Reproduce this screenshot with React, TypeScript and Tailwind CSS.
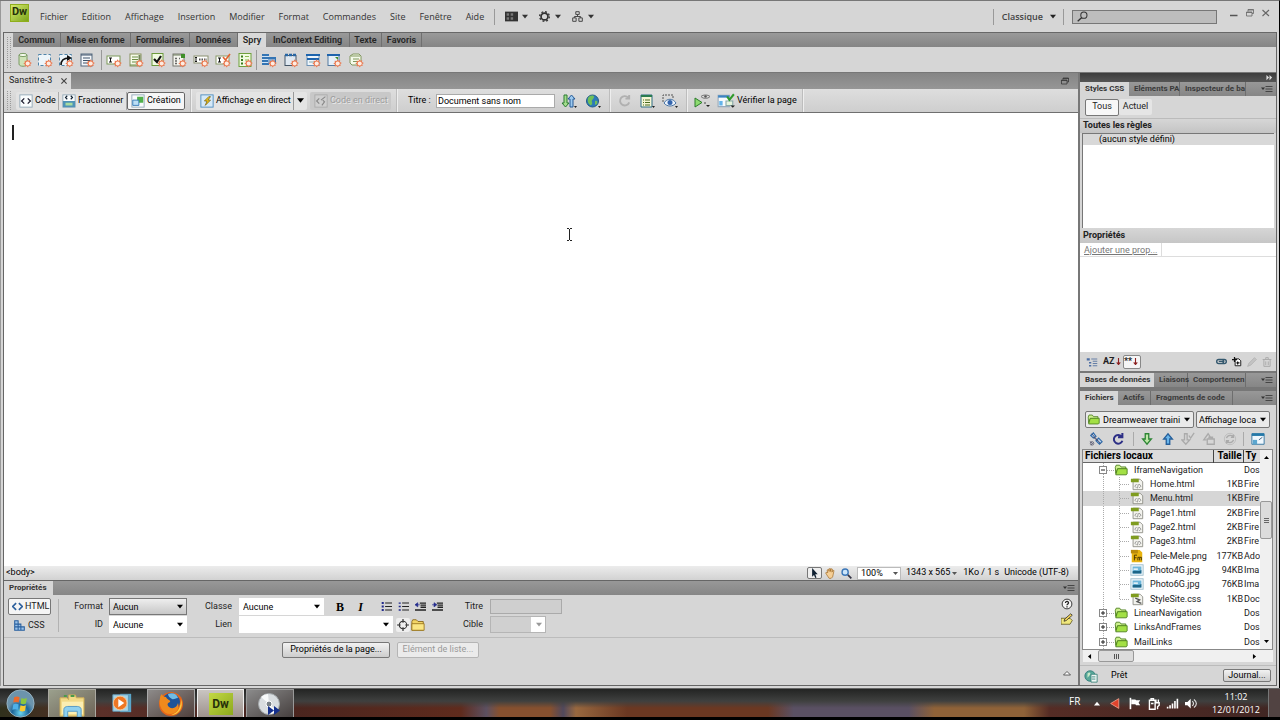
import { useState, type ReactNode } from "react";

type IconProps = { children: ReactNode; size?: string };

function Icon({ children, size = "size-4" }: IconProps) {
  return (
    <svg viewBox="0 0 16 16" className={`${size} shrink-0`} fill="none" aria-hidden="true">
      {children}
    </svg>
  );
}

function Caret({ className = "", size = "w-[7px]" }: { className?: string; size?: string }) {
  return (
    <svg viewBox="0 0 8 5" className={`h-[5px] shrink-0 ${size} ${className}`} aria-hidden="true">
      <path d="M0 0h8L4 5z" fill="currentColor" />
    </svg>
  );
}

// orange burst shown on every insert icon
function Burst() {
  return (
    <g>
      <path
        d="M11.5 7.2l1 1.600 1.700-.5-.2 1.800 1.900.9-1.600 1.100.4 1.800-1.800-.1-1.100 1.800-1.200-1.600-1.900.4.3-1.800-1.700-1 1.600-1-.3-1.900 1.900.2z"
        fill="#ea7b52"
      />
      <circle cx="11.7" cy="11.500" r="2" fill="#fdece2" />
    </g>
  );
}

const insertIcons: { name: string; art: ReactNode }[][] = [
  [
    {
      name: "Jeu de données",
      art: (
        <>
          <path d="M3 3v9c0 3 8 3 8 0V3z" fill="#cfe3b8" stroke="#7c9c66" />
          <ellipse cx="7" cy="3" rx="4" ry="1.6" fill="#f4faec" stroke="#7c9c66" />
        </>
      ),
    },
    {
      name: "Région",
      art: <rect x="1.5" y="2.5" width="12" height="11" fill="#edf5fa" stroke="#4e83a8" strokeDasharray="3 2" />,
    },
    {
      name: "Répétition",
      art: (
        <>
          <rect x="1.5" y="2.5" width="12" height="11" fill="#edf5fa" stroke="#4e83a8" strokeDasharray="3 2" />
          <path d="M3 13c0-5 3-7 8-7" stroke="#111" strokeWidth="1.6" />
          <path d="M9 3l5 3-5 3z" fill="#111" />
        </>
      ),
    },
    {
      name: "Liste de répétitions",
      art: (
        <>
          <rect x="2" y="2" width="11" height="12" fill="#f4f7fa" stroke="#55697e" />
          <path d="M2 3h11M4 6h7M4 8.500h7M4 11h5" stroke="#3e536a" />
        </>
      ),
    },
  ],
  [
    {
      name: "Champ de texte",
      art: (
        <>
          <rect x="1" y="4" width="13" height="8" fill="#fff" stroke="#7c9a5a" />
          <path d="M3 6h3M3 10h3M4.500 6v4" stroke="#111" />
        </>
      ),
    },
    {
      name: "Zone de texte",
      art: (
        <>
          <rect x="2" y="2" width="11" height="12" fill="#f6fbe9" stroke="#87915f" />
          <path d="M4 5h6M4 7.500h6M4 10h5M2 13h9" stroke="#6c8c46" />
          <path d="M11.500 3v9" stroke="#6f8557" strokeWidth="2" />
        </>
      ),
    },
    {
      name: "Case à cocher",
      art: (
        <>
          <rect x="2" y="1.500" width="11" height="12" fill="#f1fbe2" stroke="#6c9a3c" />
          <path d="M4 7l3 3 4-6" stroke="#111" strokeWidth="2.200" />
        </>
      ),
    },
    {
      name: "Sélection",
      art: (
        <>
          <rect x="2" y="2" width="11" height="12" fill="#f4f4ee" stroke="#77776f" />
          <path d="M2 3h8" stroke="#6a7a5a" />
          <path d="M10 2h4v4h-4z" fill="#3f8f2a" />
          <path d="M4 6.500h2M8 6.500h1M4 9h2M4 11.500h2" stroke="#666" strokeWidth="1.500" />
        </>
      ),
    },
    {
      name: "Mot de passe",
      art: (
        <>
          <rect x="1" y="4" width="14" height="7" fill="#fff" stroke="#8a8f70" />
          <path d="M3 6v3M2 5.500h2M2 9.500h2" stroke="#111" />
          <path d="M6 7.500h8" stroke="#555" strokeWidth="2" strokeDasharray="1.500 1" />
        </>
      ),
    },
    {
      name: "Confirmer le mot de passe",
      art: (
        <>
          <rect x="1" y="4" width="13" height="8" fill="#fff" stroke="#8a9a6a" />
          <path d="M3 6h3M3 10h3M4.500 6v4" stroke="#111" />
          <path d="M8 5l2.500 3L15 2" stroke="#e2622f" strokeWidth="1.600" />
        </>
      ),
    },
    {
      name: "Groupe de boutons radio",
      art: (
        <>
          <rect x="2" y="1.500" width="12" height="13" fill="#f1fbe2" stroke="#6fa03c" />
          <path d="M4 4.500h2M4 8h2M4 11.500h2" stroke="#3b7a1e" strokeWidth="2" />
          <path d="M8 4.500h4M8 8h4" stroke="#8dbb52" />
        </>
      ),
    },
  ],
  [
    {
      name: "Barre de menus",
      art: (
        <>
          <path d="M1 2h7v11H1zM7 5h8v7H7z" fill="#3475b4" />
          <path d="M1 4.500h7M1 7.500h6M1 10.500h6M7 8h7M7 10h4" stroke="#cfe3f5" />
        </>
      ),
    },
    {
      name: "Panneaux à onglets",
      art: (
        <>
          <rect x="2" y="3.500" width="11" height="10" fill="#dfe8f1" stroke="#456" />
          <path d="M2 3h3M6 3h3M10 3h3" stroke="#2766a4" strokeWidth="2.500" />
        </>
      ),
    },
    {
      name: "Accordéon",
      art: (
        <>
          <rect x="2" y="2.500" width="12" height="11" fill="#eef5fb" stroke="#6f93b6" />
          <path d="M1 3h14M2 7h12" stroke="#1e64ad" strokeWidth="2" />
          <path d="M4 10h6" stroke="#8aa" />
        </>
      ),
    },
    {
      name: "Panneau réductible",
      art: (
        <>
          <rect x="2" y="2.500" width="11" height="11" fill="#e5eff8" stroke="#557a9f" />
          <path d="M1 3h13" stroke="#1e64ad" strokeWidth="2" />
          <path d="M9 5h3v3z" fill="#3f8f2a" />
        </>
      ),
    },
    {
      name: "Info-bulle",
      art: (
        <>
          <path d="M2 4l3-2h6l2 2v9H4l-2-2z" fill="#f4fbea" stroke="#81965f" />
          <path d="M3 4h9M5 7h6M5 9.500h4" stroke="#81965f" />
        </>
      ),
    },
  ],
];

const menus = ["Fichier", "Edition", "Affichage", "Insertion", "Modifier", "Format", "Commandes", "Site", "Fenêtre", "Aide"];

const insertTabs = [
  { label: "Commun", width: "w-[48px]" },
  { label: "Mise en forme", width: "w-[70px]" },
  { label: "Formulaires", width: "w-[59px]" },
  { label: "Données", width: "w-[48px]" },
  { label: "Spry", width: "w-[28px]" },
  { label: "InContext Editing", width: "w-[84px]" },
  { label: "Texte", width: "w-[32px]" },
  { label: "Favoris", width: "w-[40px]" },
];

type FileRow = { name: string; kind: "folder" | "open" | "html" | "png" | "jpg" | "css"; size?: string; type: string };

const files: FileRow[] = [
  { name: "IframeNavigation", kind: "open", type: "Dos" },
  { name: "Home.html", kind: "html", size: "1KB", type: "Fire" },
  { name: "Menu.html", kind: "html", size: "1KB", type: "Fire" },
  { name: "Page1.html", kind: "html", size: "2KB", type: "Fire" },
  { name: "Page2.html", kind: "html", size: "2KB", type: "Fire" },
  { name: "Page3.html", kind: "html", size: "2KB", type: "Fire" },
  { name: "Pele-Mele.png", kind: "png", size: "177KB", type: "Ado" },
  { name: "Photo4G.jpg", kind: "jpg", size: "94KB", type: "Ima" },
  { name: "Photo6G.jpg", kind: "jpg", size: "76KB", type: "Ima" },
  { name: "StyleSite.css", kind: "css", size: "1KB", type: "Doc" },
  { name: "LinearNavigation", kind: "folder", type: "Dos" },
  { name: "LinksAndFrames", kind: "folder", type: "Dos" },
  { name: "MailLinks", kind: "folder", type: "Dos" },
];

function FolderArt() {
  return (
    <>
      <path d="M1.500 5l1-2.500h4L8 4.500h5.500V7H4L2 12z" fill="#cdf08e" stroke="#4a7d1c" />
      <path d="M2 13.500L4 6.500h11v6l-1 1z" fill="#a3e045" stroke="#4a7d1c" />
    </>
  );
}

function FileArt({ kind }: { kind: FileRow["kind"] }) {
  if (kind === "folder" || kind === "open") return <FolderArt />;
  if (kind === "png")
    return (
      <>
        <path d="M2 1h9l3 3v11H2z" fill="#e8b30f" />
        <path d="M1 1h8v4H1z" fill="#b98a0c" />
        <path d="M5 13V7h3M5 10h2.500M9 13V9.500h4V13M11 10v3" stroke="#3b2b00" />
      </>
    );
  if (kind === "jpg")
    return (
      <>
        <rect x="1" y="2" width="14" height="12" fill="#eef6fa" stroke="#9dbccb" />
        <path d="M3 4h10v8H3z" fill="#6db6da" />
        <path d="M3 9.500c3-2 6 1 10-1.500v4H3z" fill="#1d6587" />
        <path d="M4 7h5" stroke="#fff" strokeWidth="1.500" />
      </>
    );
  return (
    <>
      <path d="M3.500 2.500h8l3 3v9h-11z" fill="#f3f3ee" stroke="#8b8b84" />
      <path d="M1 2h9v4H1z" fill="#7f9c1f" />
      {kind === "html" ? (
        <path d="M7.500 8L5.500 10.500l2 2M10.500 8l2 2.500-2 2M9.500 8l-1 5" stroke="#777" strokeWidth=".8" />
      ) : (
        <path d="M6 7l5 2-3 2 5 2" stroke="#555" strokeWidth="1.500" />
      )}
    </>
  );
}

function PanelMenu() {
  return (
    <button type="button" aria-label="Options du panneau" className="ml-auto mr-[3px] text-[#333]">
      <svg viewBox="0 0 12 8" className="h-2 w-3">
        <path d="M0 2.500h4L2 5z" fill="currentColor" />
        <path d="M4.500 1.500h7M4.500 4h7M4.500 6.500h7" stroke="currentColor" strokeWidth=".8" />
      </svg>
    </button>
  );
}

function PanelTabs({ tabs }: { tabs: { label: string; width: string }[] }) {
  return (
    <div className="flex h-[14px] shrink-0 items-stretch bg-linear-to-b from-[#989898] to-[#868686] text-[8px] font-bold">
      {tabs.map((tab, i) => (
        <button
          key={tab.label}
          type="button"
          className={`${tab.width} whitespace-nowrap pl-[5px] text-left leading-[14px] ${
            i === 0 ? "bg-[#d6d6d6] text-[#333]" : "border-r border-[#6e6e6e] text-[#3b3b3b]"
          }`}
        >
          {tab.label}
        </button>
      ))}
      <PanelMenu />
    </div>
  );
}

type PickerProps = { id?: string; label: string; value: string; width: string; look?: string; disabled?: boolean };

function Picker({ id, label, value, width, look = "bg-white pl-1", disabled = false }: PickerProps) {
  return (
    <div className={`relative flex h-[17px] shrink-0 items-center ${width}`}>
      <select
        id={id}
        aria-label={id ? undefined : label}
        disabled={disabled}
        className={`h-full w-full appearance-none text-[9px] leading-[12px] text-black outline-none ${look}`}
      >
        <option>{value}</option>
      </select>
      <Caret size="w-[6px]" className={`pointer-events-none absolute right-[4px] ${disabled ? "text-[#999]" : "text-black"}`} />
    </div>
  );
}

function Grip() {
  return (
    <span className="flex w-[5px] shrink-0 gap-[2px] self-stretch py-[2px]">
      <span className="w-px border-l border-dotted border-[#9a9a9a]" />
      <span className="w-px border-l border-dotted border-[#9a9a9a]" />
    </span>
  );
}

function Divider() {
  return <span className="w-px shrink-0 self-stretch bg-[#bdbdbd] shadow-[1px_0_0_#eee]" />;
}

function MenuBar() {
  return (
    <header className="flex h-[31px] shrink-0 items-center pl-[9px] pr-[7px]">
      <span className="mb-2 flex h-[18px] w-[19px] items-center justify-center border border-[#8fae1c] bg-linear-to-br from-[#d5ea6b] to-[#7ea615] text-[11px] font-bold text-[#26320a]">
        Dw
      </span>
      <nav className="ml-[11px] flex items-center gap-[14px] pt-px text-[9px] text-[#333] [font-family:'Open_Sans','Noto_Sans',sans-serif]">
        {menus.map((m) => (
          <button key={m} type="button">{m}</button>
        ))}
      </nav>
      <span className="ml-[10px] h-4 w-px bg-[#999]" />
      <div className="ml-[10px] flex items-center gap-[11px] text-[#333]">
        <button type="button" aria-label="Disposition" className="flex items-center gap-1">
          <Icon size="size-[13px]">
            <path d="M0 2h16v12H0z" fill="#333" />
            <path d="M2 4h3v3H2zM7 4h3v3H7zM2 9h3v3H2zM7 9h3v3H7z" fill="#777" />
          </Icon>
          <Caret size="w-[6px]" />
        </button>
        <button type="button" aria-label="Extensions" className="flex items-center gap-[5px]">
          <Icon size="size-[11px]">
            <circle cx="8" cy="8" r="5" stroke="#333" strokeWidth="2.500" />
            <circle cx="8" cy="8" r="7" stroke="#333" strokeWidth="2" strokeDasharray="2.700 2.800" />
          </Icon>
          <Caret size="w-[6px]" />
        </button>
        <button type="button" aria-label="Site" className="flex items-center gap-[5px]">
          <Icon size="size-[11px]">
            <path d="M5.500 1h5v4h-5zM1 10h5v5H1zM10 10h5v5h-5zM8 5v3M3.500 10V8h9v2" stroke="#444" strokeWidth="1.400" />
          </Icon>
          <Caret size="w-[6px]" />
        </button>
      </div>
      <div className="ml-auto flex items-center">
        <span className="h-4 w-px bg-[#999]" />
        <button type="button" className="ml-[8px] flex items-center gap-[7px] text-[9px] font-semibold text-[#444] [font-family:'Open_Sans','Noto_Sans',sans-serif]">
          Classique
          <Caret size="w-[6px]" className="text-[#222]" />
        </button>
        <span className="ml-[7px] h-4 w-px bg-[#999]" />
        <label className="ml-2 flex h-[14px] w-[145px] items-center border border-[#777] bg-[#bdbdbd] pl-1">
          <Icon size="size-[11px]">
            <circle cx="10" cy="6" r="4.500" stroke="#333" strokeWidth="1.500" />
            <path d="M7 9.500L1 15" stroke="#333" strokeWidth="2" />
          </Icon>
          <input aria-label="Rechercher" className="w-full bg-transparent pl-1 text-[9px] outline-none" />
        </label>
        <div className="mb-2 ml-[13px] flex items-center gap-[8px]">
          <button type="button" aria-label="Réduire">
            <Icon size="size-2"><path d="M0 13h15" stroke="#555" strokeWidth="3" /></Icon>
          </button>
          <button type="button" aria-label="Restaurer">
            <Icon size="size-2"><path d="M4 5V1h11v8h-3M1 6h11v8H1zM1 7h11M4 2h11" stroke="#666" strokeWidth="1.600" /></Icon>
          </button>
          <button type="button" aria-label="Fermer">
            <Icon size="size-2"><path d="M1 2l13 12M14 2L1 14" stroke="#666" strokeWidth="2.200" /></Icon>
          </button>
        </div>
      </div>
    </header>
  );
}

function InsertBar() {
  const widths = ["w-[79px]", "w-[147px]", "w-[103px]"];
  return (
    <section className="flex h-[40px] shrink-0 border-t border-[#686868]">
      <div className="flex w-[9px] shrink-0 py-[2px] pl-[3px]"><Grip /></div>
      <div className="flex min-w-0 flex-1 flex-col">
        <div className="flex h-[14px] shrink-0 bg-linear-to-b from-[#9a9a9a] to-[#858585] text-[9px] font-semibold text-[#262626]">
          {insertTabs.map((tab) => (
            <button
              key={tab.label}
              type="button"
              className={`${tab.width} whitespace-nowrap leading-[14px] ${
                tab.label === "Spry" ? "bg-[#d9d9d9]" : "border-r border-[#707070]"
              }`}
            >
              {tab.label}
            </button>
          ))}
        </div>
        <div className="flex h-[26px] items-center pl-[3px]">
          {insertIcons.map((group, g) => (
            <div key={g} className="flex items-center">
              {g > 0 && <span className={`mr-[4px] h-5 w-px bg-[#999] ${g === 1 ? "ml-[6px]" : "ml-[3px]"}`} />}
              <div className={`flex justify-between ${widths[g]}`}>
                {group.map((item) => (
                  <button key={item.name} type="button" aria-label={item.name}>
                    <Icon>
                      {item.art}
                      <Burst />
                    </Icon>
                  </button>
                ))}
              </div>
            </div>
          ))}
        </div>
      </div>
    </section>
  );
}

function DocumentToolbar() {
  const [view, setView] = useState("Création");
  const views = [
    { name: "Code", width: "w-[43px]", art: <path d="M6 5L3 8l3 3M10 5l3 3-3 3" stroke="#223" strokeWidth="1.500" /> },
    {
      name: "Fractionner",
      width: "w-[68px]",
      art: (
        <>
          <path d="M1 8h14v7H1z" fill="#4f93b8" />
          <path d="M4 10h8v3H4z" fill="#a9dca0" />
          <path d="M6 2L4 4l2 2M10 2l2 2-2 2" stroke="#123" strokeWidth="1.300" />
        </>
      ),
    },
    {
      name: "Création",
      width: "w-[58px]",
      art: (
        <>
          <path d="M7 3h7v7H7z" fill="#4fb04a" />
          <path d="M2 7h7v6H2z" fill="#bcdff5" stroke="#2b75b5" />
        </>
      ),
    },
  ];
  return (
    <div className="flex h-[24px] shrink-0 items-center border-b border-[#6f6f6f] bg-linear-to-b from-[#dedede] to-[#cecece] pl-[3px] text-[9px] text-black">
      <Grip />
      <div className="ml-[4px] flex h-[18px] overflow-hidden rounded-xs bg-[#e2e2e2]">
        {views.map((v) => (
          <button
            key={v.name}
            type="button"
            onClick={() => setView(v.name)}
            className={`flex items-center gap-[2px] whitespace-nowrap pl-[3px] ${v.width} ${
              view === v.name ? "rounded-xs border border-[#666] bg-[#f6f6f6]" : "border-r border-[#aaa]"
            }`}
          >
            <Icon size="size-[14px]">
              <rect x="1" y="1" width="14" height="14" fill="#fafcfd" stroke="#8fa5b5" />
              {v.art}
            </Icon>
            {v.name}
          </button>
        ))}
      </div>
      <span className="ml-[5px] flex h-full"><Divider /></span>
      <div className="ml-[5px] flex h-[18px] rounded-xs bg-[#e4e4e4]">
        <button type="button" className="flex w-[98px] items-center gap-[2px] whitespace-nowrap border-r border-[#999] pl-[4px]">
          <Icon size="size-[14px]">
            <rect x="1" y="1" width="14" height="14" fill="#d5e9f8" stroke="#4a88bd" />
            <path d="M10 3L5 8h3l-2 5 6-6H9l3-4z" fill="#f3c615" stroke="#6f5a12" strokeWidth=".8" />
          </Icon>
          Affichage en direct
        </button>
        <button type="button" aria-label="Options d'affichage" className="flex w-[13px] items-center justify-center">
          <Caret />
        </button>
      </div>
      <button type="button" disabled className="ml-[3px] flex h-[18px] w-[81px] items-center gap-[2px] whitespace-nowrap rounded-xs bg-[#c8c8c8] pl-1 text-[#9c9c9c] [text-shadow:1px_1px_0_#e8e8e8]">
        <Icon size="size-[14px]">
          <rect x="1" y="1" width="14" height="14" fill="#cfcfcf" stroke="#aaa" />
          <path d="M6 5L3 8l3 3M10 7l2 2-3 4M13 3L8 7" stroke="#888" strokeWidth="1.300" />
        </Icon>
        Code en direct
      </button>
      <span className="ml-[5px] flex h-full"><Divider /></span>
      <label className="ml-[11px] flex items-center gap-[4px]">
        <span className="w-[24px] whitespace-nowrap">Titre :</span>
        <input defaultValue="Document sans nom" className="h-[14px] w-[119px] border border-[#aaa] bg-white px-[1px] text-[9px] outline-none" />
      </label>
      <div className="ml-[6px] flex items-center gap-[8px]">
        <button type="button" aria-label="Gestion des fichiers">
          <Icon>
            <path d="M3 2h3v8h2l-3.500 4L1 10h2z" fill="#a4dc8c" stroke="#2a7a31" />
            <path d="M9 14V6H7l3.500-4L14 6h-2v8z" fill="#9cc9ef" stroke="#265a96" />
            <path d="M13 13h3l-1.500 2z" fill="#222" />
          </Icon>
        </button>
        <button type="button" aria-label="Aperçu dans le navigateur">
          <Icon>
            <circle cx="7.500" cy="8" r="6" fill="#2c7ab8" stroke="#225c86" />
            <path d="M3 5c2-3 6-3 6-1S6 7 7 9s-1 4-2 3-3-3-2-7zM10 8c2-1 3 0 2 3l-2 1z" fill="#6fc05a" />
            <path d="M13 13h3l-1.500 2z" fill="#222" />
          </Icon>
        </button>
      </div>
      <span className="ml-[8px] flex h-full"><Divider /></span>
      <div className="ml-[7px] flex items-center gap-[7px]">
        <button type="button" aria-label="Actualiser" disabled>
          <Icon size="size-[15px]"><path d="M12 5a5 5 0 1 0 1 5M13 2v4H9" stroke="#b0b0b0" strokeWidth="2" /></Icon>
        </button>
        <button type="button" aria-label="Options de l'affichage">
          <Icon>
            <path d="M2 2h11v12H2z" fill="#f6f6d4" stroke="#2f6d86" />
            <path d="M2 3h11" stroke="#2b7c50" strokeWidth="2" />
            <path d="M4 7h1M6 7h5M4 9.500h1M6 9.500h5M4 12h1M6 12h5" stroke="#4a6b20" />
            <path d="M13 13h3l-1.500 2z" fill="#222" />
          </Icon>
        </button>
        <button type="button" aria-label="Assistances visuelles">
          <Icon>
            <path d="M1 9V2h10v3" stroke="#555" strokeDasharray="2 1" />
            <path d="M2 10c3-5 9-5 12 0-3 4-9 4-12 0z" fill="#edf4fc" stroke="#4471a3" />
            <circle cx="8" cy="9.500" r="2.500" fill="#3465ad" />
            <path d="M13 13h3l-1.500 2z" fill="#222" />
          </Icon>
        </button>
      </div>
      <span className="ml-[8px] flex h-full"><Divider /></span>
      <div className="ml-[7px] flex items-center gap-[7px]">
        <button type="button" aria-label="Valider">
          <Icon>
            <path d="M1 5l7 4.500L1 14z" fill="#8edb70" stroke="#2c7c2c" />
            <path d="M7 3.500c2-2 7-2 9 0-2 2.500-7 2.500-9 0z" fill="#ddd" stroke="#777" />
            <circle cx="11.500" cy="3.500" r="1.300" fill="#555" />
            <path d="M11 9v2" stroke="#777" strokeWidth="1.500" />
            <path d="M12 12h4l-2 2z" fill="#222" />
          </Icon>
        </button>
        <button type="button" className="flex items-center gap-[2px] whitespace-nowrap">
          <Icon size="size-[18px]">
            <path d="M1 3h10v10H1z" fill="#f6fafc" stroke="#9ab" />
            <path d="M1 4h10" stroke="#3b84c4" strokeWidth="2" />
            <path d="M2 8h3v4H2z" fill="#64b4ea" />
            <path d="M8 8h6v4H8z" fill="#e7f4dc" stroke="#8aa" />
            <path d="M9 4l2 3 4-5" stroke="#2f9a2b" strokeWidth="1.800" />
            <path d="M12 12h4l-2 2z" fill="#222" />
          </Icon>
          Vérifier la page
        </button>
      </div>
      <span className="ml-[5px] flex h-full"><Divider /></span>
    </div>
  );
}

function StatusBar() {
  return (
    <div className="flex h-[14px] shrink-0 items-center bg-linear-to-b from-[#ececec] to-[#d2d2d2] pl-[2px] pr-[9px] text-[9px] text-black">
      <span>&lt;body&gt;</span>
      <div className="ml-auto flex items-center">
        <button type="button" aria-label="Sélection" className="flex h-[12px] w-[15px] items-center justify-center rounded-xs border border-[#777] bg-[#eee]">
          <Icon size="size-[10px]"><path d="M5 0v14l3-3 2 5 2-1-2-5h4z" fill="#123" /></Icon>
        </button>
        <button type="button" aria-label="Main" className="ml-[3px]">
          <Icon size="size-[11px]">
            <path d="M2 9L1 7l2-1 1 1-1-4 2-1 1 3V1h2v4l1-4 2 1-1 4 2-3 1 1-1 5-1 4-2 2H6z" fill="#f5cf97" stroke="#a26a25" />
          </Icon>
        </button>
        <button type="button" aria-label="Zoom" className="ml-[5px]">
          <Icon size="size-[11px]">
            <circle cx="6" cy="6" r="4.500" fill="#cbe5fa" stroke="#3c77b8" strokeWidth="2" />
            <path d="M10 10l5 5" stroke="#334" strokeWidth="2.500" />
          </Icon>
        </button>
        <div className="relative ml-[5px] flex w-[44px] items-center">
          <select aria-label="Niveau de zoom" className="h-[13px] w-full appearance-none border border-[#bbb] bg-white pl-[3px] text-[9px] leading-[11px]">
            <option>100%</option>
          </select>
          <Caret size="w-[5px]" className="pointer-events-none absolute right-[3px] text-[#555]" />
        </div>
        <button type="button" className="ml-[5px] flex items-center gap-[2px] whitespace-nowrap">
          1343 x 565
          <Caret size="w-[5px]" className="text-[#555]" />
        </button>
        <span className="ml-[6px] whitespace-nowrap">1Ko / 1 s</span>
        <span className="ml-[5px]">Unicode (UTF-8)</span>
      </div>
    </div>
  );
}

function Properties() {
  const lists = ["Liste simple", "Liste numérotée", "Retrait négatif", "Retrait positif"];
  return (
    <section className="flex shrink-0 flex-col border-t border-[#666]">
      <PanelTabs tabs={[{ label: "Propriétés", width: "w-[49px]" }]} />
      <div className="flex h-[43px] items-start border-b border-[#bcbcbc] pl-[4px] pt-[3px] text-[9px] text-[#222]">
        <div className="flex w-[43px] flex-col gap-[2px]">
          <button type="button" className="flex h-[17px] items-center gap-[2px] rounded-xs border border-[#777] bg-[#f5f5f5] pl-[3px]">
            <Icon size="size-[11px]"><path d="M6 3L1 8l5 5M10 3l5 5-5 5" stroke="#2c5f9c" strokeWidth="2.400" /></Icon>
            HTML
          </button>
          <button type="button" className="flex h-[17px] items-center gap-[3px] pl-[6px]">
            <Icon size="size-[11px]">
              <path d="M1 1h5v14H1zM1 6h9v9H1zM1 10h14v5H1z" fill="#9bc2e8" stroke="#285f9e" strokeWidth="1.500" />
            </Icon>
            CSS
          </button>
        </div>
        <span className="ml-[7px] mt-px h-[33px] w-px bg-[#b2b2b2]" />
        <div className="ml-[10px] grid grid-cols-[34px_78px] items-center gap-x-[6px] gap-y-px text-right">
          <label htmlFor="format">Format</label>
          <Picker id="format" label="Format" value="Aucun" width="w-[78px]" look="border border-[#777] bg-linear-to-b from-[#eee] to-[#c8c8c8] pl-[3px]" />
          <label htmlFor="ident">ID</label>
          <Picker id="ident" label="ID" value="Aucune" width="w-[78px]" />
        </div>
        <div className="flex w-[258px] flex-col gap-px pl-[16px]">
          <div className="flex items-center">
            <label htmlFor="classe" className="w-[29px] text-right">Classe</label>
            <span className="w-[7px]" />
            <Picker id="classe" label="Classe" value="Aucune" width="w-[85px]" />
            <div className="ml-[12px] flex w-[27px] justify-between text-[12px] leading-4 text-black [font-family:'Liberation_Serif',serif]">
              <button type="button" className="font-bold" aria-label="Gras">B</button>
              <button type="button" className="font-bold italic" aria-label="Italique">I</button>
            </div>
            <div className="ml-[18px] flex gap-[6px]">
              {lists.map((name, i) => (
                <button key={name} type="button" aria-label={name}>
                  <Icon size="size-[11px]">
                    {i < 2 ? (
                      <>
                        <path d="M6 3h10M6 8h10M6 13h10" stroke="#222" strokeWidth="1.500" />
                        <path d="M1 3h3M1 8h3M1 13h3" stroke="#222a8c" strokeWidth={i === 0 ? 3 : 2} />
                      </>
                    ) : (
                      <>
                        <path d="M7 3h9M8 6h8M8 9h8M0 13h16" stroke="#222" strokeWidth="2" />
                        <path d={i === 2 ? "M0 5.500l4-3v6zM3 5.500h4" : "M7 5.500l-4-3v6zM0 5.500h4"} fill="#222a8c" stroke="#222a8c" />
                      </>
                    )}
                  </Icon>
                </button>
              ))}
            </div>
          </div>
          <div className="flex items-center">
            <label htmlFor="lien" className="w-[29px] text-right">Lien</label>
            <span className="w-[7px]" />
            <Picker id="lien" label="Lien" value="" width="w-[154px]" />
            <button type="button" aria-label="Pointer vers un fichier" className="ml-[3px] flex size-[14px] items-center justify-center rounded-xs bg-[#eee]">
              <Icon size="size-[12px]">
                <circle cx="8" cy="8" r="5" stroke="#333" strokeWidth="1.400" />
                <path d="M8 0v5M8 11v5M0 8h5M11 8h5" stroke="#333" strokeWidth="1.600" />
              </Icon>
            </button>
            <button type="button" aria-label="Rechercher un fichier" className="ml-px">
              <Icon size="size-[14px]">
                <path d="M1 4l1-2h4l2 2h6v10H1z" fill="#f3d565" stroke="#87651a" />
                <path d="M1 6.500h14V14H1z" fill="#fbe683" stroke="#9a761e" />
              </Icon>
            </button>
          </div>
        </div>
        <div className="grid grid-cols-[38px_72px] items-center gap-x-[7px] gap-y-px text-right">
          <label htmlFor="titre">Titre</label>
          <div className="flex h-[17px] items-center">
            <input id="titre" disabled className="h-[15px] w-full border border-[#aaa] bg-[#cfcfcf]" />
          </div>
          <label htmlFor="cible">Cible</label>
          <Picker
            id="cible"
            label="Cible"
            value=""
            width="w-[56px]"
            disabled
            look="border border-[#b5b5b5] bg-[linear-gradient(to_right,#d0d0d0_40px,#fff_40px)]"
          />
        </div>
        <div className="ml-auto mr-[5px] flex flex-col gap-[3px]">
          <button type="button" aria-label="Aide">
            <Icon size="size-[12px]">
              <circle cx="8" cy="8" r="6.500" fill="#f5f5f5" stroke="#333" strokeWidth="1.300" />
              <path d="M6 6.500c0-3 4.500-2 4 0S8 8 8 9.500M8 11v1.500" stroke="#222" strokeWidth="1.700" />
            </Icon>
          </button>
          <button type="button" aria-label="Quick Tag Editor">
            <Icon size="size-[12px]">
              <path d="M0 7h12l3 3-3 5H0z" fill="#f0e77c" stroke="#564d18" />
              <path d="M4 11l1-3 8-7 2 2-8 7z" fill="#f6d65c" stroke="#222" />
            </Icon>
          </button>
        </div>
      </div>
      <div className="flex h-[47px] items-start pl-[278px] pt-[4px] text-[9px]">
        <button type="button" className="h-[16px] w-[108px] whitespace-nowrap rounded-xs border border-[#777] bg-linear-to-b from-[#f2f2f2] to-[#cdcdcd] text-black">
          Propriétés de la page...
        </button>
        <button type="button" disabled className="ml-[7px] h-[16px] w-[82px] whitespace-nowrap rounded-xs border border-[#b5b5b5] bg-[#ebebeb] text-[#999]">
          Elément de liste...
        </button>
        <button type="button" aria-label="Réduire le panneau" className="ml-auto mr-[7px] mt-[27px]">
          <Icon size="size-2"><path d="M1 12L8 5l7 7z" fill="#fff" stroke="#333" strokeWidth="1.500" /></Icon>
        </button>
      </div>
    </section>
  );
}

function StylesPanel() {
  return (
    <section className="flex min-h-0 flex-1 flex-col">
      <PanelTabs
        tabs={[
          { label: "Styles CSS", width: "w-[49px]" },
          { label: "Eléments PA", width: "w-[51px]" },
          { label: "Inspecteur de ba", width: "w-[66px]" },
        ]}
      />
      <div className="flex h-[23px] shrink-0 items-center border-b border-[#bbb] pl-[5px] text-[9px] text-[#222]">
        <button type="button" className="h-[17px] w-[34px] rounded-xs border border-[#777] bg-[#f7f7f7]">Tous</button>
        <button type="button" className="h-[16px] w-[33px] rounded-xs bg-[#e5e5e5]">Actuel</button>
      </div>
      <h2 className="h-[14px] shrink-0 bg-linear-to-b from-[#d6d6d6] to-[#c4c4c4] pl-[3px] text-[9px] font-bold leading-[12px] text-[#222]">Toutes les règles</h2>
      <ul className="mx-[2px] h-[95px] shrink-0 border-l border-t border-[#777] bg-white text-[9px]">
        <li className="h-[11px] bg-[#d8d8d8] pl-[16px] leading-[11px]">(aucun style défini)</li>
      </ul>
      <h2 className="h-[15px] shrink-0 bg-linear-to-b from-[#d6d6d6] to-[#c6c6c6] pl-[3px] text-[9px] font-bold leading-[14px] text-[#222]">Propriétés</h2>
      <div className="flex min-h-0 flex-1 flex-col bg-white">
        <div className="flex h-[14px] items-center border-b border-[#ddd]">
          <a href="#ajouter" className="h-full w-[82px] border-r border-[#ddd] pl-[4px] text-[9px] leading-[14px] text-[#777] underline">Ajouter une prop...</a>
        </div>
      </div>
      <div className="flex h-[19px] shrink-0 items-center pl-[6px] pr-[4px] text-[9px] font-bold text-[#222]">
        <button type="button" aria-label="Vue par catégorie">
          <Icon size="size-[12px]">
            <path d="M1 3h4v3H1zM4 8h3v2H4zM4 12h3v2H4z" fill="#4d6fa5" />
            <path d="M7 4h8M9 7h6M9 10h6M9 13h6" stroke="#667fa6" strokeWidth="1.500" />
          </Icon>
        </button>
        <button type="button" aria-label="Vue par liste" className="ml-[5px] flex items-center">
          AZ
          <Icon size="size-[7px]"><path d="M8 0v14M4 10l4 5 4-5" stroke="#8c2020" strokeWidth="2.500" /></Icon>
        </button>
        <button type="button" aria-label="Propriétés définies" className="ml-px flex h-[14px] w-[18px] items-center justify-center rounded-xs border border-[#888] bg-[#f5f5f5]">
          **
          <Icon size="size-[7px]"><path d="M8 0v14M4 10l4 5 4-5" stroke="#8c2020" strokeWidth="2.500" /></Icon>
        </button>
        <div className="ml-auto flex items-center gap-[5px]">
          <button type="button" aria-label="Joindre une feuille de style">
            <Icon size="size-[11px]">
              <path d="M4 5h4a3 3 0 0 1 0 6H4a3 3 0 0 1 0-6zM9 5h3a3 3 0 0 1 0 6H9" stroke="#34586e" strokeWidth="2" />
              <path d="M4 8h8" stroke="#34586e" strokeWidth="2" />
            </Icon>
          </button>
          <button type="button" aria-label="Nouvelle règle CSS">
            <Icon size="size-[10px]">
              <path d="M5 3h6l3 3v8H5z" fill="#fff" stroke="#222" strokeWidth="1.600" />
              <path d="M0 4h8M4 0v8M9 7v5M7 9.500h5" stroke="#111" strokeWidth="2" />
            </Icon>
          </button>
          <button type="button" aria-label="Modifier la règle" disabled>
            <Icon size="size-[10px]"><path d="M1 15l2-5 9-9 3 3-9 9z" fill="#c3c3c3" stroke="#aaa" /></Icon>
          </button>
          <button type="button" aria-label="Supprimer la règle" disabled>
            <Icon size="size-[10px]"><path d="M1 4h14M6 4V1h4v3M3 4v11h10V4M6 7v6M10 7v6" stroke="#aaa" strokeWidth="1.500" /></Icon>
          </button>
        </div>
      </div>
    </section>
  );
}

const siteTools: { name: string; width: string; art: ReactNode }[] = [
  {
    name: "Connecter",
    width: "w-[22px]",
    art: (
      <>
        <path d="M2 4l3-3 3 4-3 2zM8 10l3-3 4 4-3 3z" fill="#bcd5ef" stroke="#316aa8" strokeWidth="1.300" />
        <path d="M5 6l5 4M1 11l3 2-2 2M3 2l10 11" stroke="#446" />
        <circle cx="3.500" cy="13" r="2" stroke="#667" />
      </>
    ),
  },
  { name: "Actualiser", width: "w-[22px]", art: <path d="M12 5a5 5 0 1 0 1 5M13 1v5H8" stroke="#2d2f86" strokeWidth="2.300" /> },
  { name: "Acquérir", width: "w-[27px]", art: <path d="M6 2h4v6h3l-5 6-5-6h3z" fill="#bfe8a8" stroke="#2d8535" strokeWidth="1.500" /> },
  { name: "Placer", width: "w-[16px]", art: <path d="M6 14V8H3l5-6 5 6h-3v6z" fill="#69b5ea" stroke="#245f9b" strokeWidth="1.500" /> },
  { name: "Extraire", width: "w-[24px]", art: <path d="M4 2h3v7h3l-4.500 5L1 9h3zM9 4l2 3 4-6" stroke="#aaa" strokeWidth="1.500" /> },
  { name: "Archiver", width: "w-[18px]", art: <path d="M5 9H2l5-7 4 6M6 8h8v6H6zM8 8V6h4v2" stroke="#aaa" strokeWidth="1.500" /> },
  {
    name: "Synchroniser",
    width: "w-[23px]",
    art: (
      <>
        <circle cx="8" cy="8" r="6.500" stroke="#bbb" />
        <path d="M4 7c1-4 7-4 8-1M12 3v3H9M12 9c-1 4-7 4-8 1M4 13v-3h3" stroke="#aaa" strokeWidth="1.500" />
      </>
    ),
  },
  {
    name: "Développer",
    width: "w-[28px]",
    art: (
      <>
        <path d="M1 2h14v12H1z" fill="#eff7fd" stroke="#2c6f9c" />
        <path d="M1 3h14" stroke="#2478a8" strokeWidth="3" />
        <path d="M2 9h5v5H2z" fill="#5ba6cf" />
        <path d="M9 9l4-3" stroke="#357" />
      </>
    ),
  },
];

function FilesPanel() {
  const [selected, setSelected] = useState("Menu.html");
  return (
    <section className="flex shrink-0 flex-col">
      <PanelTabs
        tabs={[
          { label: "Fichiers", width: "w-[38px]" },
          { label: "Actifs", width: "w-[33px]" },
          { label: "Fragments de code", width: "w-[82px]" },
        ]}
      />
      <div className="flex h-[23px] items-end justify-between pl-[5px] pr-[6px]">
        <div className="relative flex items-center">
          <Picker label="Site" value="Dreamweaver traini" width="w-[109px]" look="rounded-xs border border-[#777] bg-[#eaeaea] pl-[17px]" />
          <span className="pointer-events-none absolute left-[2px]"><Icon size="size-[13px]"><FolderArt /></Icon></span>
        </div>
        <Picker label="Affichage" value="Affichage loca" width="w-[74px]" look="rounded-xs border border-[#777] bg-[#eaeaea] pl-[2px]" />
      </div>
      <div className="flex h-[21px] items-center px-[5px]">
        {siteTools.map((tool) => (
          <button
            key={tool.name}
            type="button"
            aria-label={tool.name}
            className={`flex justify-center ${tool.width} ${
              tool.name === "Acquérir" ? "ml-[4px] border-l border-[#aaa]" : tool.name === "Développer" ? "ml-auto border-l border-[#aaa]" : ""
            }`}
          >
            <Icon size="size-[14px]">{tool.art}</Icon>
          </button>
        ))}
      </div>
      <div className="ml-[2px] mr-[3px] flex border border-[#888] bg-white">
        <div className="min-w-0 flex-1 overflow-hidden">
          <table className="h-[199px] w-full table-fixed border-collapse text-[9px] leading-[12px] text-[#222]">
            <thead>
              <tr className="h-[12px] border-b border-[#666] bg-[#dcdcdc] text-left text-[10px] text-black">
                <th scope="col" className="border-r border-[#444] py-0 pl-[2px] leading-[11px]">Fichiers locaux</th>
                <th scope="col" className="w-[30px] border-r border-[#444] py-0 pl-[4px] leading-[11px]">Taille</th>
                <th scope="col" className="w-[17px] py-0 pl-[2px] leading-[11px]">Ty</th>
              </tr>
            </thead>
            <tbody>
              {files.map((file) => {
                const isFolder = file.kind === "folder" || file.kind === "open";
                return (
                  <tr key={file.name} onClick={() => setSelected(file.name)} className={selected === file.name ? "bg-[#d6d6d6]" : ""}>
                    <td className="p-0">
                      <div className="flex items-center">
                        {isFolder ? (
                          <>
                            <svg viewBox="0 0 31 14" className="h-[14px] w-[31px] shrink-0" fill="none">
                              <rect x="16.5" y="3.5" width="7" height="7" fill="#fff" stroke="#888" />
                              <path d={file.kind === "open" ? "M18 7h4" : "M18 7h4M20 5v4"} stroke="#222" />
                              <path d="M24 7.500h7M20.500 0v3M20.500 11v3" stroke="#aaa" strokeDasharray="1 1" />
                            </svg>
                            <Icon size="size-[14px]"><FileArt kind={file.kind} /></Icon>
                            <span className="ml-[6px]">{file.name}</span>
                          </>
                        ) : (
                          <>
                            <svg viewBox="0 0 47 14" className="h-[14px] w-[47px] shrink-0" fill="none">
                              <path
                                d={file.kind === "css" ? "M20.500 0v14M36.500 0v7M37 7.500h9" : "M20.500 0v14M36.500 0v14M37 7.500h9"}
                                stroke="#aaa"
                                strokeDasharray="1 1"
                              />
                            </svg>
                            <Icon size="size-[14px]"><FileArt kind={file.kind} /></Icon>
                            <span className="ml-[6px] whitespace-nowrap">{file.name}</span>
                          </>
                        )}
                      </div>
                    </td>
                    <td className="p-0 text-right">{file.size}</td>
                    <td className="whitespace-nowrap p-0 pl-px">{file.type}</td>
                  </tr>
                );
              })}
            </tbody>
          </table>
        </div>
        <div className="flex w-[12px] shrink-0 flex-col items-center bg-[#f0f0f0] py-[5px]">
          <Caret size="w-[5px]" className="rotate-180" />
          <div className="mt-[41px] flex h-[38px] w-full flex-col items-center justify-center gap-px rounded-xs border border-[#999] bg-[#dcdcdc]">
            <span className="h-px w-[5px] bg-[#666]" />
            <span className="h-px w-[5px] bg-[#666]" />
            <span className="h-px w-[5px] bg-[#666]" />
          </div>
          <Caret size="w-[5px]" className="mt-auto" />
        </div>
      </div>
      <div className="mx-[3px] flex h-[12px] items-center bg-[#f0f0f0] pl-[4px] pr-[16px]">
        <Caret size="w-[5px]" className="rotate-90" />
        <div className="ml-[6px] flex h-full w-[36px] items-center justify-center gap-px rounded-xs border border-[#999] bg-[#dcdcdc]">
          <span className="h-[5px] w-px bg-[#555]" />
          <span className="h-[5px] w-px bg-[#555]" />
          <span className="h-[5px] w-px bg-[#555]" />
        </div>
        <Caret size="w-[5px]" className="ml-auto -rotate-90" />
      </div>
      <div className="mt-[3px] flex h-[20px] items-center border-t border-[#bbb] pl-[4px] pr-[5px] text-[9px]">
        <Icon size="size-[14px]">
          <circle cx="7" cy="8" r="6" fill="#59a89a" stroke="#2d7c78" />
          <path d="M4 5c2-2 4-1 3 1S5 9 4 10z" fill="#c6e9c8" />
          <path d="M8 6h7v9H8z" fill="#eef7f4" stroke="#3c857c" />
          <path d="M9 9h4M9 11.500h4" stroke="#3c857c" />
        </Icon>
        <span className="ml-[13px]">Prêt</span>
        <button type="button" className="ml-auto h-[13px] w-[48px] rounded-xs border border-[#777] bg-linear-to-b from-[#f2f2f2] to-[#ccc] leading-[11px]">Journal...</button>
      </div>
    </section>
  );
}

function Taskbar() {
  return (
    <footer className="flex h-[29px] shrink-0 items-stretch border-t border-[#666] bg-[linear-gradient(to_bottom,#232423_0px,#3f403f_12px,transparent_19px),linear-gradient(to_right,#30301c_0%,#5b3029_8%,#46241f_20%,#5f2b1d_36%,#5c5061_38%,#86502f_39%,#86502f_43%,#50485c_44%,#98683f_45%,#6b3822_49%,#6b3822_60%,#5a5063_62%,#5a5063_71%,#8f6238_73%,#8f6238_80%,#552c25_82%,#402623_100%)]">
      <button type="button" aria-label="Démarrer" className="flex w-[48px] items-center pl-[6px]">
        <svg viewBox="0 0 32 32" className="size-[29px]">
          <defs>
            <radialGradient id="orb" cy=".85">
              <stop offset="0" stopColor="#6cd5ef" />
              <stop offset=".6" stopColor="#1d6699" />
              <stop offset="1" stopColor="#6c94ac" />
            </radialGradient>
          </defs>
          <circle cx="16" cy="16" r="15" fill="url(#orb)" stroke="#9ab6c4" />
          <path d="M9 9c2-1 4-1 6 0l-1 6c-2-1-4-1-6 0z" fill="#ec6a2c" />
          <path d="M17 10c2 1 4 1 6 0l-1 6c-2 1-4 1-6 0z" fill="#8cc63e" />
          <path d="M8 17c2-1 4-1 6 0l-1 6c-2-1-4-1-6 0z" fill="#4eb1ea" />
          <path d="M16 18c2 1 4 1 6 0l-1 6c-2 1-4 1-6 0z" fill="#fbca31" />
        </svg>
      </button>
      <button type="button" aria-label="Explorateur" className="flex w-[48px] items-end justify-center border border-b-0 border-[#aaa8a0] bg-linear-to-br from-[#9ba08d] to-[#6d6458]">
        <svg viewBox="0 0 28 24" className="h-[23px] w-[27px]">
          <path d="M1 4h7l2 2V1h7l1 3h8v19H1z" fill="#f2da87" stroke="#cfae56" />
          <path d="M3 8h22v13H3z" fill="#fbeeb2" />
          <path d="M5 24v-8c0-2 2-3 4-3h10c2 0 4 1 4 3v8h-4v-6H9v6z" fill="#8ed0ef" stroke="#5699c4" />
          <path d="M5 2h3M12 2h4" stroke="#4a9a4a" strokeWidth="2" />
        </svg>
      </button>
      <button type="button" aria-label="Lecteur multimédia" className="flex w-[51px] items-center justify-center">
        <svg viewBox="0 0 24 24" className="size-[22px]">
          <path d="M10 2h12v20H10z" fill="#5aa6ca" />
          <path d="M2 3h17v18H2z" fill="#a5d5e8" stroke="#6297b3" />
          <circle cx="10" cy="12" r="7.500" fill="#ee7623" stroke="#f8c899" />
          <path d="M8 7.500v9l6.500-4.500z" fill="#fff" />
        </svg>
      </button>
      <button type="button" aria-label="Firefox" className="flex w-[48px] items-center justify-center border border-b-0 border-[#aaa] bg-linear-to-br from-[#8d8b8a] to-[#50403c]">
        <svg viewBox="0 0 26 26" className="size-[26px]">
          <circle cx="13" cy="13" r="12" fill="#e3641a" />
          <circle cx="13" cy="11" r="9" fill="#1d5398" />
          <path d="M10 3c5-2 9 0 10 4-3 0-4 2-6 1s-4-3-4-5z" fill="#71bbe3" />
          <path d="M2 7c0-2 1-3 2-4 0 2 2 3 4 3 1 3 5 3 4 5-3 1-3 3-1 5 4 3 8 0 9-4 2 6-2 11-8 11C5 23 0 15 2 7z" fill="#f08a1c" />
          <path d="M23 8c3 8-2 16-10 16 7-2 10-8 10-16z" fill="#f9c83d" />
        </svg>
      </button>
      <button type="button" aria-label="Dreamweaver" className="ml-[2px] flex w-[47px] items-center justify-center border border-b-0 border-[#eee] bg-linear-to-b from-[#c9c5c1] to-[#9e928d]">
        <span className="flex h-[22px] w-[24px] items-center justify-center bg-linear-to-br from-[#c3d944] to-[#8da91c] text-[12px] font-bold text-[#27300a]">Dw</span>
      </button>
      <button type="button" aria-label="Capture" className="ml-[2px] flex w-[48px] items-center justify-center border border-b-0 border-[#999] bg-linear-to-br from-[#8b8b8b] to-[#46403f]">
        <svg viewBox="0 0 24 24" className="size-[24px]">
          <circle cx="11" cy="12" r="10.500" fill="#d9dde0" stroke="#a3a8ab" />
          <path d="M11 12L3 5a10 10 0 0 1 7-3zM11 12l8 7a10 10 0 0 1-6 3z" fill="#f8fafb" />
          <circle cx="11" cy="12" r="3" fill="#7a8288" stroke="#fff" />
          <path d="M10 14l6 4.500-6 4.500zM16 14l6 4.500-6 4.500z" fill="#142f8c" />
        </svg>
      </button>
      <div className="ml-auto flex items-center text-[10px] text-white [font-family:'Open_Sans','Noto_Sans',sans-serif]">
        <span className="mb-1 w-[12px]">FR</span>
        <Caret size="w-[6px]" className="ml-[13px] rotate-180" />
        <div className="ml-[9px] flex items-center gap-[6px]">
          <Icon size="size-[13px]"><path d="M2 8l10-6v12z" fill="#e2432c" stroke="#f3a38f" /></Icon>
          <Icon size="size-[13px]"><path d="M3 1v14" stroke="#fff" strokeWidth="2" /><path d="M4 3h5l1 1h5l-2 3 2 3h-5L9 9H4z" fill="#fff" /></Icon>
          <Icon size="size-[13px]"><path d="M3 4h7v11H3zM5 4V2h3v2M5 8h3M11 3v4M14 3v4M10 7h5v3l-2 2v3" stroke="#fff" strokeWidth="1.700" /></Icon>
          <Icon size="size-[13px]"><path d="M1 12h2v2H1zM4 10h2v4H4zM7 8h2v6H7zM10 5h2v9h-2zM13 2h2v12h-2z" fill="#fff" /></Icon>
          <Icon size="size-[13px]"><path d="M0 6h3l4-4v12l-4-4H0z" fill="#fff" /><path d="M9 5c2 2 2 4 0 6M11 3c4 3 4 7 0 10" stroke="#ddd" strokeWidth="1.400" /></Icon>
        </div>
        <div className="ml-[14px] w-[48px] whitespace-nowrap text-center text-[9px] leading-[13px]">
          <div>11:02</div>
          <div>12/01/2012</div>
        </div>
        <span className="ml-[8px] h-full w-[12px] border-l border-[#777] bg-[#514342]" />
      </div>
    </footer>
  );
}

export default function App() {
  return (
    <div className="flex h-screen min-h-[600px] flex-col overflow-hidden bg-black pb-[3px] [font-family:'Roboto','Noto_Sans',sans-serif]">
      <div className="flex min-h-0 flex-1 flex-col border-r border-t border-r-black border-t-[#777] bg-[#d6d6d6] pb-[2px]">
        <div className="flex min-h-0 flex-1 flex-col border-l border-[#999] pr-[2px]">
          <MenuBar />
          <div className="ml-[2px] flex min-h-0 flex-1 flex-col border-x border-b border-[#666]">
            <InsertBar />
            <div className="flex min-h-0 flex-1 border-t border-[#777]">
              <main className="flex min-w-0 flex-1 flex-col">
                <div className="flex h-[16px] shrink-0 items-stretch bg-linear-to-b from-[#858585] to-[#969696] text-[9px]">
                  <button type="button" className="w-[54px] bg-[#dadada] pl-[5px] text-left text-[#222]">Sanstitre-3</button>
                  <button type="button" aria-label="Fermer Sanstitre-3" className="flex w-[13px] items-center bg-[#dadada] pl-[3px]">
                    <Icon size="size-[6px]"><path d="M1 1l14 14M15 1L1 15" stroke="#444" strokeWidth="3" /></Icon>
                  </button>
                  <button type="button" aria-label="Restaurer le document" className="ml-auto mr-[9px]">
                    <Icon size="size-2"><path d="M4 5V2h11v8h-3M1 6h11v8H1zM1 7h11M4 3h11" stroke="#333" strokeWidth="1.500" /></Icon>
                  </button>
                </div>
                <DocumentToolbar />
                <div className="relative min-h-0 flex-1 bg-white">
                  <span className="absolute left-[8px] top-[12px] h-[15px] w-[2px] bg-[#222]" />
                  <svg viewBox="0 0 7 13" className="absolute left-[562px] top-[115px] h-[13px] w-[7px]" fill="none">
                    <path d="M1 .500h2M4 .500h2M1 12.500h2M4 12.500h2M3.500 1v11" stroke="#222" />
                  </svg>
                </div>
                <StatusBar />
                <Properties />
              </main>
              <aside className="flex w-[198px] shrink-0 flex-col border-l-2 border-[#777]">
                <div className="flex h-[9px] shrink-0 items-center justify-end bg-linear-to-b from-[#3d3d3d] to-[#555] pr-[3px]">
                  <Icon size="size-[7px]"><path d="M1 2l6 6-6 6zM8 2l6 6-6 6z" fill="#ddd" /></Icon>
                </div>
                <StylesPanel />
                <div className="border-b-4 border-t-2 border-[#777]">
                  <PanelTabs
                    tabs={[
                      { label: "Bases de données", width: "w-[74px]" },
                      { label: "Liaisons", width: "w-[34px]" },
                      { label: "Comportemen", width: "w-[58px]" },
                    ]}
                  />
                </div>
                <FilesPanel />
              </aside>
            </div>
          </div>
        </div>
      </div>
      <Taskbar />
    </div>
  );
}
